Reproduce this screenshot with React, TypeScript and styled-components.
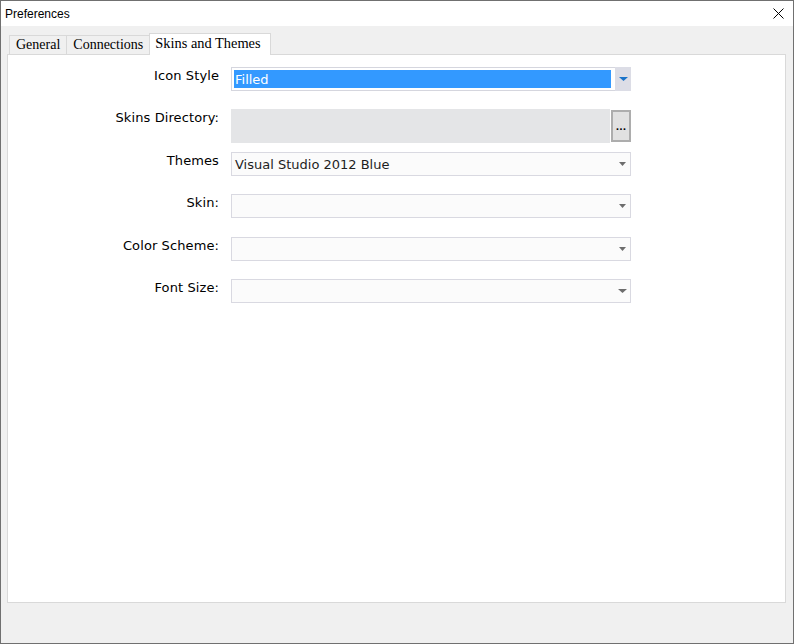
import React from "react";
import styled, { createGlobalStyle } from "styled-components";

const GlobalStyle = createGlobalStyle`
  html, body { margin: 0; padding: 0; background: #f0f0f0; }
  * { box-sizing: border-box; }
`;

const Window = styled.div`
  width: 794px;
  height: 644px;
  border: 1px solid #707070;
  background: #f0f0f0;
  display: flex;
  flex-direction: column;
`;

const TitleBar = styled.div`
  height: 25px;
  flex: none;
  background: #ffffff;
  display: flex;
  align-items: center;
  justify-content: space-between;
  padding: 0 9px 0 4px;
  font-family: "Liberation Sans", Arial, sans-serif;
  font-size: 12px;
  color: #000;
`;

const Body = styled.div`
  flex: 1;
  display: flex;
  flex-direction: column;
  padding: 7px 7px 40px 6px;
`;

const TabStrip = styled.div`
  display: flex;
  align-items: flex-end;
  height: 21px;
  padding-left: 2px;
  flex: none;
`;

const Tab = styled.div<{ $active?: boolean }>`
  font-family: "Liberation Serif", "Times New Roman", serif;
  font-size: ${(p) => (p.$active ? "14.4px" : "14px")};
  color: #000;
  display: flex;
  align-items: center;
  border: 1px solid #d9d9d9;
  border-bottom: none;
  margin-left: -1px;
  &:first-child { margin-left: 0; }
  height: ${(p) => (p.$active ? "22px" : "19px")};
  padding: ${(p) => (p.$active ? "0 9px 2px 5px" : "0 6px")};
  background: ${(p) => (p.$active ? "#ffffff" : "#f0f0f0")};
  margin-bottom: ${(p) => (p.$active ? "-1px" : "0")};
  position: relative;
  z-index: ${(p) => (p.$active ? 1 : 0)};
`;

const Panel = styled.div`
  flex: 1;
  background: #ffffff;
  border: 1px solid #d9d9d9;
  padding-top: 12px;
  display: flex;
  flex-direction: column;
`;

const Row = styled.div<{ $h: number }>`
  display: grid;
  grid-template-columns: 210px 400px;
  column-gap: 13px;
  height: ${(p) => p.$h}px;
  align-items: start;
`;

const Label = styled.div`
  text-align: right;
  font-family: "DejaVu Sans", Verdana, sans-serif;
  font-size: 13px;
  letter-spacing: 0.1px;
  line-height: 15px;
  padding-top: 1px;
  padding-right: 0;
  margin-right: -1px;
  color: #000;
`;

const Combo = styled.div`
  height: 24px;
  border: 1px solid #d9d9e1;
  background: #fbfbfb;
  display: flex;
  align-items: center;
  padding-left: 3px;
  font-family: "DejaVu Sans", Verdana, sans-serif;
  font-size: 13px;
  color: #1e1e1e;
`;

const ComboText = styled.div`
  flex: 1;
  white-space: nowrap;
`;

const CaretBox = styled.div<{ $w: number }>`
  width: ${(p) => p.$w}px;
  display: flex;
  justify-content: center;
  align-items: center;
  align-self: stretch;
`;

const ActiveCombo = styled.div`
  height: 24px;
  border: 1px solid #d5d6de;
  background: #ffffff;
  display: flex;
  font-family: "DejaVu Sans", Verdana, sans-serif;
  font-size: 13px;
`;

const Highlight = styled.div`
  margin: 2px 4px 2px 2px;
  flex: 1;
  background: #3399ff;
  color: #ffffff;
  display: flex;
  align-items: center;
  padding-left: 1px;
`;

const DropButton = styled.div`
  width: 16px;
  margin: -1px -1px -1px 0;
  background: #dcdde6;
  display: flex;
  align-items: center;
  justify-content: center;
`;

const DirGroup = styled.div`
  display: flex;
  height: 34px;
  gap: 1px;
`;

const DirBox = styled.div`
  flex: 1;
  background: #e4e5e7;
`;

const BrowseButton = styled.div`
  width: 20px;
  height: 32px;
  margin-top: 1px;
  border: 2px solid #adadad;
  background: #e1e1e1;
  display: flex;
  align-items: center;
  justify-content: center;
  font-family: "DejaVu Sans", Verdana, sans-serif;
  font-size: 9px;
  font-weight: bold;
  color: #000;
  padding-top: 2px;
`;

const Caret = ({ w, h, color }: { w: number; h: number; color: string }) => (
  <svg width={w} height={h} viewBox={`0 0 ${w} ${h}`}>
    <polygon points={`0,0 ${w},0 ${w / 2},${h}`} fill={color} />
  </svg>
);

const CloseIcon = () => (
  <svg width="11" height="11" viewBox="0 0 11 11">
    <path d="M0.5 0.5 L10.5 10.5 M10.5 0.5 L0.5 10.5" stroke="#000" strokeWidth="1" fill="none" />
  </svg>
);

type ComboRowProps = { label: string; value?: string; h: number; caretW?: number; caretH?: number };

const ComboRow = ({ label, value = "", h, caretW = 7, caretH = 4 }: ComboRowProps) => (
  <Row $h={h}>
    <Label>{label}</Label>
    <Combo>
      <ComboText>{value}</ComboText>
      <CaretBox $w={15}>
        <Caret w={caretW} h={caretH} color="#6d6d6d" />
      </CaretBox>
    </Combo>
  </Row>
);

export default function App() {
  return (
    <>
      <GlobalStyle />
      <Window>
        <TitleBar>
          <span>Preferences</span>
          <CloseIcon />
        </TitleBar>
        <Body>
          <TabStrip>
            <Tab>General</Tab>
            <Tab>Connections</Tab>
            <Tab $active>Skins and Themes</Tab>
          </TabStrip>
          <Panel>
            <Row $h={42}>
              <Label>Icon Style</Label>
              <ActiveCombo>
                <Highlight>Filled</Highlight>
                <DropButton>
                  <Caret w={9} h={4} color="#1a73c9" />
                </DropButton>
              </ActiveCombo>
            </Row>
            <Row $h={43}>
              <Label>Skins Directory:</Label>
              <DirGroup>
                <DirBox />
                <BrowseButton>...</BrowseButton>
              </DirGroup>
            </Row>
            <ComboRow label="Themes" value="Visual Studio 2012 Blue" h={42} />
            <ComboRow label="Skin:" h={43} />
            <ComboRow label="Color Scheme:" h={42} />
            <ComboRow label="Font Size:" h={43} caretW={9} caretH={4} />
          </Panel>
        </Body>
      </Window>
    </>
  );
}
